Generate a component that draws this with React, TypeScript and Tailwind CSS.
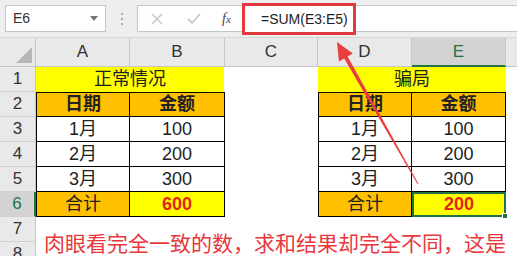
import React from 'react';

const cols = ['A', 'B', 'C', 'D', 'E'];

const font = { fontFamily: '"Liberation Sans", "Noto Sans CJK SC", sans-serif' };

const RowHead = ({ n, active = false }: { n: number; active?: boolean }) => (
  <div
    className={`flex items-center justify-center border-b border-[#d0d0d0] text-[17px] text-[#333] ${
      active ? 'bg-[#d3d3d3] border-r-2 border-r-[#217346] text-[#217346]' : 'bg-[#e9e9e9] border-r border-r-[#c6c6c6]'
    }`}
  >
    {n}
  </div>
);

const Cell = ({
  children,
  className = '',
}: {
  children?: React.ReactNode;
  className?: string;
}) => <div className={`flex items-center justify-center text-[18px] text-[#222] ${className}`}>{children}</div>;

const App = () => {
  return (
    <div className="relative w-[517px] h-[256px] overflow-hidden bg-white select-none" style={font}>
      {/* Formula bar */}
      <div className="flex items-center h-[37px] bg-[#eeeeee] pl-[5px]">
        <div className="flex items-center justify-between w-[101px] h-[27px] bg-white border border-[#c6c6c6] px-[7px]">
          <span className="text-[14px] text-[#333]">E6</span>
          <span className="w-0 h-0 border-x-[4px] border-x-transparent border-t-[5px] border-t-[#777]" />
        </div>
        <div className="flex flex-col gap-[3px] w-[31px] items-center">
          <span className="w-[2px] h-[2px] bg-[#aaa]" />
          <span className="w-[2px] h-[2px] bg-[#aaa]" />
          <span className="w-[2px] h-[2px] bg-[#aaa]" />
        </div>
        <div className="flex items-center flex-1 h-[27px] bg-white border border-[#c6c6c6] border-r-0">
          <svg width="16" height="16" viewBox="0 0 16 16" className="ml-[11px]">
            <path d="M3 3 L13 13 M13 3 L3 13" stroke="#c8c8c8" strokeWidth="1.6" />
          </svg>
          <svg width="16" height="16" viewBox="0 0 16 16" className="ml-[21px]">
            <path d="M2 8 L6 12 L14 3" stroke="#c8c8c8" strokeWidth="1.8" fill="none" />
          </svg>
          <span
            className="ml-[20px] text-[14px] italic text-[#444]"
            style={{ fontFamily: '"Liberation Serif", serif' }}
          >
            f<span className="text-[11px]">x</span>
          </span>
        </div>
      </div>
      {/* red highlight box around formula */}
      <div className="absolute left-[242px] top-[3px] w-[114px] h-[32px] border-[3px] border-[#e03a3e] bg-white flex items-center pl-[16px]">
        <span className="text-[14px] text-[#222]">=SUM(E3:E5)</span>
      </div>

      {/* Sheet grid */}
      <div className="grid grid-cols-[36px_94px_95px_93px_94px_94px_1fr] grid-rows-[29px_repeat(8,25px)] border-t border-[#d6d6d6]">
        {/* header row */}
        <div className="relative bg-[#e9e9e9] border-r border-b border-[#c6c6c6]">
          <span className="absolute right-[3px] bottom-[3px] w-0 h-0 border-l-[16px] border-l-transparent border-b-[16px] border-b-[#b7b7b7]" />
        </div>
        {cols.map((c) => (
          <div
            key={c}
            className={`flex items-center justify-center text-[17px] border-r border-[#c6c6c6] ${
              c === 'E'
                ? 'bg-[#d3d3d3] border-b-2 border-b-[#217346] text-[#217346]'
                : 'bg-[#e9e9e9] border-b border-b-[#c6c6c6] text-[#333]'
            }`}
          >
            {c}
          </div>
        ))}
        <div className="bg-[#e9e9e9] border-b border-[#c6c6c6]" />

        {/* row 1 */}
        <RowHead n={1} />
        <Cell className="col-span-2 bg-[#ffff00] mr-[1px]">正常情况</Cell>
        <Cell />
        <Cell className="col-span-2 bg-[#ffff00]">骗局</Cell>
        <Cell />

        {/* row 2 */}
        <RowHead n={2} />
        <Cell className="bg-[#ffc000] font-bold border border-black">日期</Cell>
        <Cell className="bg-[#ffc000] font-bold border-y border-r border-black">金额</Cell>
        <Cell />
        <Cell className="bg-[#ffc000] font-bold border border-black">日期</Cell>
        <Cell className="bg-[#ffc000] font-bold border-y border-r border-black">金额</Cell>
        <Cell />

        {[
          ['1月', '100', 3],
          ['2月', '200', 4],
          ['3月', '300', 5],
        ].map(([m, v, n]) => (
          <React.Fragment key={n}>
            <RowHead n={n as number} />
            <Cell className="border-x border-b border-black">{m}</Cell>
            <Cell className="border-r border-b border-black">{v}</Cell>
            <Cell />
            <Cell className="border-x border-b border-black">{m}</Cell>
            <Cell className="border-r border-b border-black">{v}</Cell>
            <Cell />
          </React.Fragment>
        ))}

        {/* row 6 */}
        <RowHead n={6} active />
        <Cell className="bg-[#ffc000] border-x border-b border-black">合计</Cell>
        <Cell className="bg-[#ffff00] border-r border-b border-black font-bold text-[#e3231f]">
          <span className="text-[#e3231f]">600</span>
        </Cell>
        <Cell />
        <Cell className="bg-[#ffc000] border-x border-b border-black">合计</Cell>
        <Cell className="relative bg-[#ffff00] border-2 border-[#217346] font-bold">
          <span className="text-[#e3231f]">200</span>
          <span className="absolute -right-[4px] -bottom-[4px] w-[6px] h-[6px] bg-[#217346] border border-white" />
        </Cell>
        <Cell />

        <RowHead n={7} />
        <Cell />
        <Cell />
        <Cell />
        <Cell />
        <Cell />
        <Cell />
        <RowHead n={8} />
        <Cell />
        <Cell />
        <Cell />
        <Cell />
        <Cell />
        <Cell />
      </div>

      {/* text box over the sheet */}
      <div
        className="absolute left-[44px] top-[228px] whitespace-nowrap text-[21px] leading-[28px] text-[#e8383d]"
        style={{ fontFamily: '"Noto Sans CJK SC", sans-serif' }}
      >
        肉眼看完全一致的数，求和结果却完全不同，这是
      </div>

      {/* arrow */}
      <svg className="absolute left-0 top-0 pointer-events-none" width="517" height="256" viewBox="0 0 517 256">
        <polygon
          points="337,42 352.8,53.6 347.6,56.6 418.4,183.8 417.6,184.2 344.2,58.6 339,61.6"
          fill="#ea3d3d"
        />
      </svg>
    </div>
  );
};

export default App;
